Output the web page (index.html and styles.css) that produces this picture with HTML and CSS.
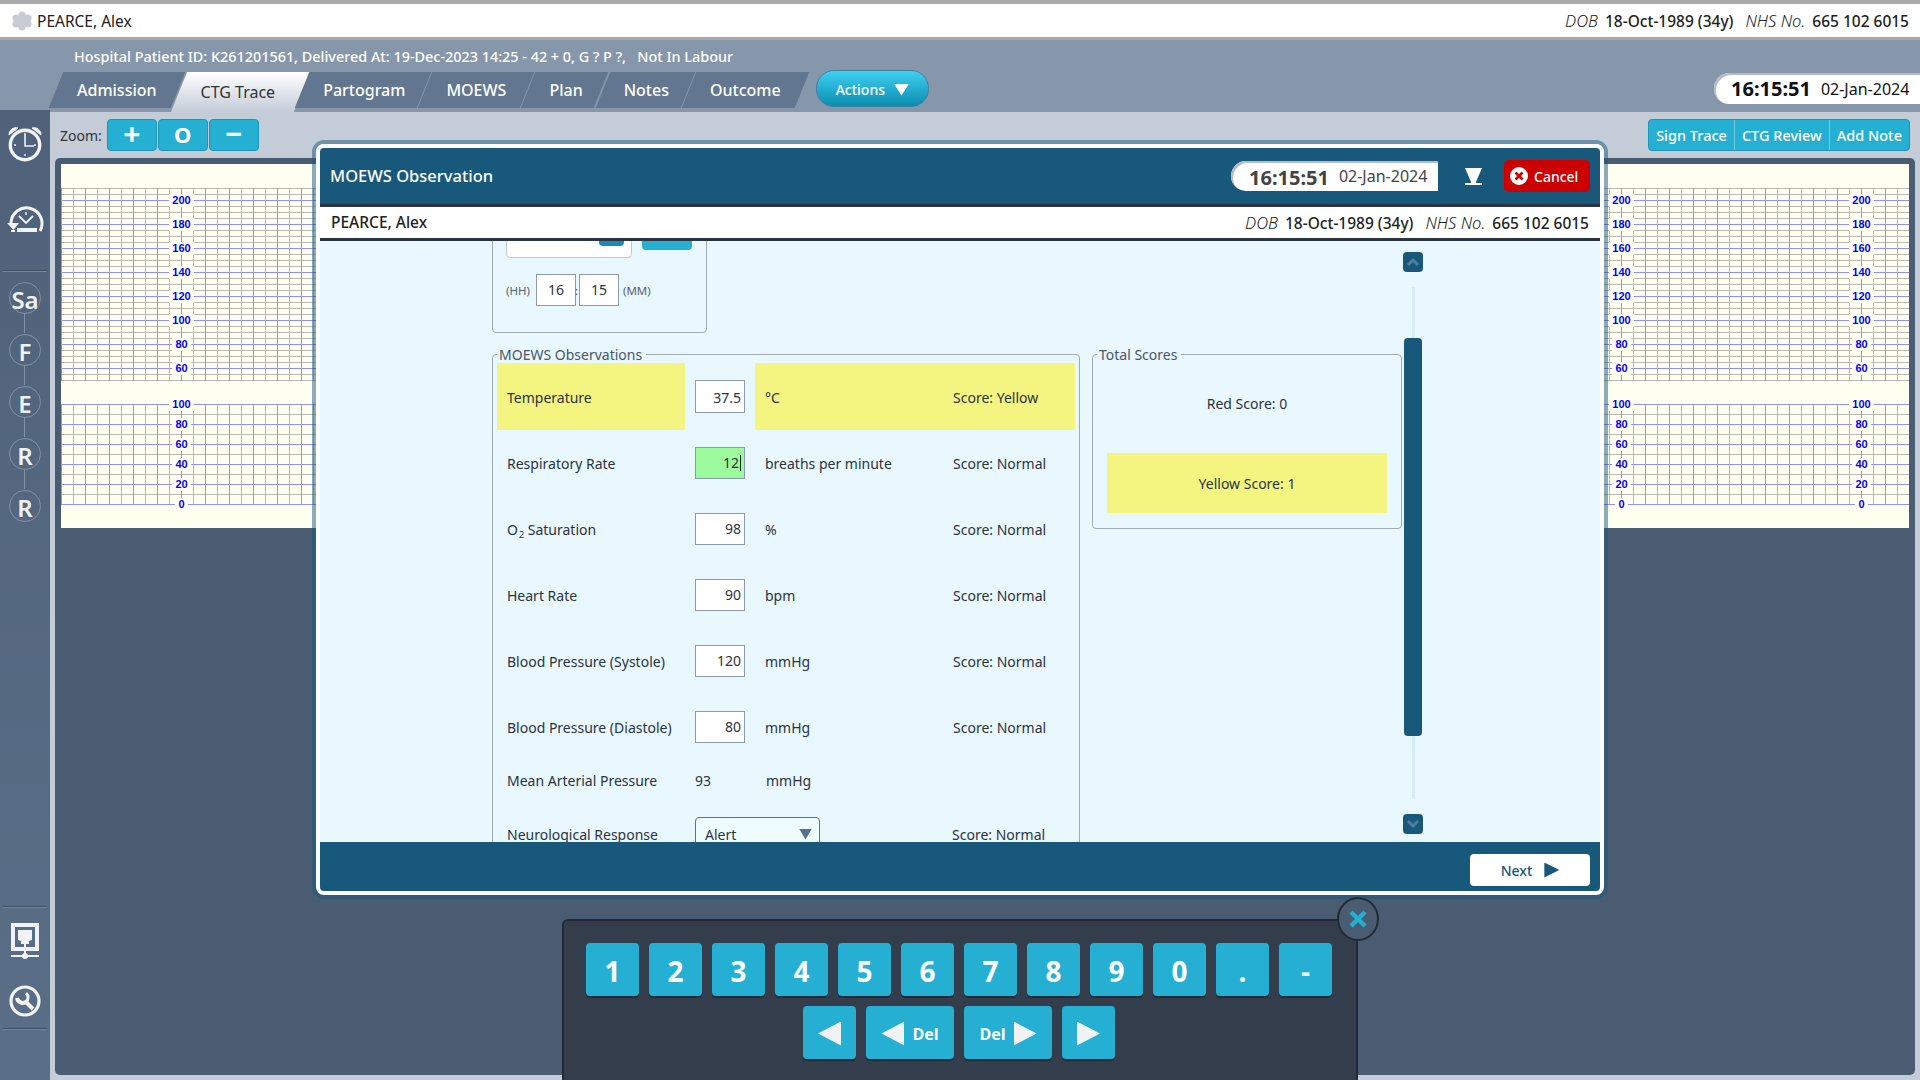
FILE: index.html
```html
<!DOCTYPE html>
<html lang="en">
<head>
    <meta charset="UTF-8">
    <title>MOEWS Observation</title>
    <link rel="stylesheet" href="styles.css">
</head>
<body>

<div class="patient-bar">
    <svg class="logo" width="22" height="20" viewBox="0 0 22 20"><g fill="#c9cbd3"><circle cx="11" cy="4" r="3.6"/><circle cx="11" cy="16" r="3.6"/><circle cx="5" cy="7" r="3.6"/><circle cx="17" cy="7" r="3.6"/><circle cx="5" cy="13" r="3.6"/><circle cx="17" cy="13" r="3.6"/><circle cx="11" cy="10" r="6"/></g></svg>
    <span class="patient-name">PEARCE, Alex</span>
    <span class="patient-meta"><i>DOB</i> <b>18-Oct-1989 (34y)</b> <i>NHS No.</i> <b>665 102 6015</b></span>
</div>

<div class="header">
    <div class="info">Hospital Patient ID: K261201561, Delivered At: 19-Dec-2023 14:25 - 42 + 0, G ? P ?, &nbsp; Not In Labour</div>
    <div class="tabs">
        <div class="tab">Admission</div>
        <div class="tab active">CTG Trace</div>
        <div class="tab tab-tight">Partogram</div>
        <div class="tab">MOEWS</div>
        <div class="tab tab-tight">Plan</div>
        <div class="tab tab-tight">Notes</div>
        <div class="tab">Outcome</div>
        <div class="actions">Actions <span class="tri-down"></span></div>
        <div class="clock"><b>16:15:51</b><span>02-Jan-2024</span></div>
    </div>
</div>

<div class="main">
    <div class="sidebar">
        <svg class="side-alarm" width="36" height="38" viewBox="0 0 36 38" fill="none" stroke="#f1f3f8"><circle cx="18" cy="21" r="14.7" stroke-width="3.4"/><path d="M18 9v13h9" stroke-width="1.6"/><path d="M18 30v2M7 21h2M27 21h2" stroke-width="1.4"/><path d="M2 11a7 7 0 0 1 9-7zM34 11a7 7 0 0 0-9-7z" fill="#f1f3f8" stroke-width="1"/></svg>
        <svg class="side-history" width="38" height="34" viewBox="0 0 38 34" fill="none" stroke="#f1f3f8"><path d="M5 20A15.5 15.5 0 1 1 34 28" stroke-width="3"/><path d="M1 20h12l-5.500 7z" fill="#f1f3f8" stroke="none"/><path d="M13 13l7 7 7-7" stroke-width="1.8"/><path d="M20 9v3" stroke-width="1.4"/><path d="M11 27h20" stroke-width="4"/><path d="M5 28h4" stroke-width="2"/></svg>
        <div class="side-sep"></div>
        <div class="step">Sa</div>
        <div class="step">F</div>
        <div class="step">E</div>
        <div class="step">R</div>
        <div class="step">R</div>
        <div class="side-sep push"></div>
        <svg class="side-monitor" width="28" height="36" viewBox="0 0 28 36"><path d="M0 0h28v28H0zM4 4v20h20V4z" fill="#f1f3f8" fill-rule="evenodd"/><path d="M7 7h14v10l-3 1v3h-3v12h-2V21h-3v-3l-3-1z" fill="#f1f3f8"/><path d="M0 32h28v2H0z" fill="#f1f3f8"/><circle cx="14" cy="33" r="3" fill="#f1f3f8"/></svg>
        <svg class="side-wrench" width="32" height="32" viewBox="0 0 32 32" fill="none" stroke="#f1f3f8"><circle cx="16" cy="16" r="14" stroke-width="3.2"/><path d="M8 13a6 6 0 0 0 9 4l7 7" stroke-width="4"/><path d="M17 17a6 6 0 0 0 0-9" stroke-width="3"/></svg>
        <div class="side-sep last"></div>
    </div>

    <div class="content">
        <div class="toolbar">
            <span class="zoom-label">Zoom:</span>
            <div class="zoom-btn zoom-sign">+</div>
            <div class="zoom-btn">O</div>
            <div class="zoom-btn zoom-sign">−</div>
            <div class="trace-btns">
                <div class="trace-btn">Sign Trace</div>
                <div class="trace-btn">CTG Review</div>
                <div class="trace-btn">Add Note</div>
            </div>
        </div>
        <div class="panel">
            <div class="paper">
                <div class="chart chart-fhr">
                    <div class="scale scale-a"><span>200</span><span>180</span><span>160</span><span>140</span><span>120</span><span>100</span><span>80</span><span>60</span></div>
                    <div class="scale scale-b"><span>200</span><span>180</span><span>160</span><span>140</span><span>120</span><span>100</span><span>80</span><span>60</span></div>
                    <div class="scale scale-c"><span>200</span><span>180</span><span>160</span><span>140</span><span>120</span><span>100</span><span>80</span><span>60</span></div>
                </div>
                <div class="chart chart-toco">
                    <div class="scale scale-a"><span>100</span><span>80</span><span>60</span><span>40</span><span>20</span><span>0</span></div>
                    <div class="scale scale-b"><span>100</span><span>80</span><span>60</span><span>40</span><span>20</span><span>0</span></div>
                    <div class="scale scale-c"><span>100</span><span>80</span><span>60</span><span>40</span><span>20</span><span>0</span></div>
                </div>
            </div>
        </div>
    </div>
</div>

<div class="modal">
    <div class="modal-inner">
        <div class="modal-head">
            <span class="modal-title">MOEWS Observation</span>
            <div class="modal-clock"><b>16:15:51</b><span>02-Jan-2024</span></div>
            <svg class="funnel" width="17" height="17" viewBox="0 0 17 17"><path d="M0 0h17l-6 14v1h6v2H0v-2h6v-1z" fill="#fff"/></svg>
            <div class="cancel">
                <svg width="18" height="18" viewBox="0 0 18 18"><circle cx="9" cy="9" r="9" fill="#fff"/><path d="M5.500 5.500l7 7M12.500 5.500l-7 7" stroke="#cc0000" stroke-width="2.600"/></svg>
                Cancel
            </div>
        </div>
        <div class="modal-sub">
            <span class="sub-name">PEARCE, Alex</span>
            <span class="patient-meta"><i>DOB</i> <b>18-Oct-1989 (34y)</b> <i>NHS No.</i> <b>665 102 6015</b></span>
        </div>
        <div class="modal-body">
            <div class="form-col">
                <div class="time-box">
                    <div class="date-row">
                        <div class="date-input"><div class="date-icon"></div></div>
                        <div class="date-btn"></div>
                    </div>
                    <div class="time-row">
                        <span class="hint">(HH)</span>
                        <div class="time-input">16</div>
                        <span class="colon">:</span>
                        <div class="time-input">15</div>
                        <span class="hint">(MM)</span>
                    </div>
                </div>
                <fieldset class="obs">
                    <legend>MOEWS Observations</legend>
                    <div class="obs-row yellow">
                        <div class="obs-label">Temperature</div>
                        <div class="obs-box tall">37.5</div>
                        <div class="obs-rest"><span class="obs-unit">°C</span><span>Score: Yellow</span></div>
                    </div>
                    <div class="obs-row">
                        <div class="obs-label">Respiratory Rate</div>
                        <div class="obs-box focus">12</div>
                        <div class="obs-rest"><span class="obs-unit">breaths per minute</span><span>Score: Normal</span></div>
                    </div>
                    <div class="obs-row">
                        <div class="obs-label"><span>O<sub>2</sub> Saturation</span></div>
                        <div class="obs-box">98</div>
                        <div class="obs-rest"><span class="obs-unit">%</span><span>Score: Normal</span></div>
                    </div>
                    <div class="obs-row">
                        <div class="obs-label">Heart Rate</div>
                        <div class="obs-box">90</div>
                        <div class="obs-rest"><span class="obs-unit">bpm</span><span>Score: Normal</span></div>
                    </div>
                    <div class="obs-row">
                        <div class="obs-label">Blood Pressure (Systole)</div>
                        <div class="obs-box">120</div>
                        <div class="obs-rest"><span class="obs-unit">mmHg</span><span>Score: Normal</span></div>
                    </div>
                    <div class="obs-row">
                        <div class="obs-label">Blood Pressure (Diastole)</div>
                        <div class="obs-box">80</div>
                        <div class="obs-rest"><span class="obs-unit">mmHg</span><span>Score: Normal</span></div>
                    </div>
                    <div class="obs-row map">
                        <div class="obs-label">Mean Arterial Pressure</div>
                        <div class="obs-plain">93</div>
                        <div class="obs-rest"><span class="obs-unit">mmHg</span></div>
                    </div>
                    <div class="obs-row">
                        <div class="obs-label">Neurological Response</div>
                        <div class="obs-select">Alert <span class="select-arrow"></span></div>
                        <div class="obs-rest select-rest"><span class="obs-unit"></span><span>Score: Normal</span></div>
                    </div>
                </fieldset>
            </div>
            <fieldset class="totals">
                <legend>Total Scores</legend>
                <div class="total-line">Red Score: 0</div>
                <div class="total-line total-yellow">Yellow Score: 1</div>
            </fieldset>
            <div class="scroller">
                <div class="scroll-btn"><svg width="14" height="10" viewBox="0 0 14 10" fill="none" stroke="#4f7f9c" stroke-width="3"><path d="M2 8l5-5 5 5"/></svg></div>
                <div class="track track-top"></div>
                <div class="thumb"></div>
                <div class="track track-end"></div>
                <div class="scroll-btn"><svg width="14" height="10" viewBox="0 0 14 10" fill="none" stroke="#4f7f9c" stroke-width="3"><path d="M2 2l5 5 5-5"/></svg></div>
            </div>
        </div>
        <div class="modal-foot">
            <div class="next">Next <span class="tri-right small"></span></div>
        </div>
    </div>
</div>

<div class="keypad">
    <div class="key-close"><svg width="18" height="18" viewBox="0 0 18 18" stroke="#25b0d3" stroke-width="4.400"><path d="M2 2l14 14M16 2L2 16"/></svg></div>
    <div class="key-row">
        <div class="key">1</div><div class="key">2</div><div class="key">3</div><div class="key">4</div><div class="key">5</div><div class="key">6</div><div class="key">7</div><div class="key">8</div><div class="key">9</div><div class="key">0</div><div class="key">.</div><div class="key">-</div>
    </div>
    <div class="key-row">
        <div class="key"><span class="tri-left"></span></div>
        <div class="key wide"><span class="tri-left"></span><span class="del">Del</span></div>
        <div class="key wide"><span class="del">Del</span><span class="tri-right"></span></div>
        <div class="key"><span class="tri-right"></span></div>
    </div>
</div>

</body>
</html>
```

FILE: styles.css
```css
* {
    box-sizing: border-box;
}
body {
    position: relative;
    width: 1920px;
    height: 1080px;
    margin: 0;
    overflow: hidden;
    background-color: #c4ccd8;
    color: #2b3340;
    font-family: "Noto Sans", sans-serif;
    font-size: 14px;
}

/* patient strip */
.patient-bar {
    display: flex;
    align-items: center;
    height: 40px;
    padding: 0 11px;
    background-color: #fff;
    border-top: 4px solid #aaa;
    border-bottom: 3px solid #a8a8a8;
    font-size: 15.5px;
}
.logo {
    margin-right: 4px;
}
.patient-name {
    color: #222;
}
.patient-meta {
    margin-left: auto;
    color: #222;
    font-size: 15.5px;
}
.patient-meta i {
    margin-left: 8px;
    font-size: 16.5px;
    font-weight: 300;
}
.patient-meta b {
    margin-left: 3px;
    font-weight: 500;
}

/* header + tabs */
.header {
    height: 72px;
    background-color: #8697ac;
}
.info {
    height: 30px;
    padding: 4px 0 0 74px;
    color: #fff;
    font-size: 14.4px;
    font-weight: 500;
    line-height: 26px;
}
.tabs {
    display: flex;
    align-items: flex-start;
    height: 42px;
    padding-left: 56px;
    gap: 1px;
}
.tab {
    position: relative;
    isolation: isolate;
    height: 36px;
    margin-top: 2px;
    padding: 0 21px;
    color: #fff;
    font-size: 16px;
    font-weight: 500;
    line-height: 36px;
}
.tab-tight {
    padding-right: 19px;
}
.tab::before {
    content: "";
    position: absolute;
    inset: 0;
    z-index: -1;
    background-color: #62778f;
    transform: skewX(-22deg);
}
.tab.active {
    height: 40px;
    padding: 0 26px 0 22px;
    color: #333;
    font-weight: 400;
    line-height: 40px;
}
.tab.active::before {
    background: linear-gradient(#fff, #c4ccd8);
}
.actions {
    display: flex;
    align-items: center;
    gap: 9px;
    height: 37px;
    margin-left: 13px;
    padding: 2px 19px 0;
    border: 1px solid #3f7f9c;
    border-radius: 18px;
    background: linear-gradient(#3fd0f2, #0a8db0);
    color: #fff;
    font-weight: 500;
}
.tri-down {
    width: 15px;
    height: 12px;
    background-color: #fff;
    clip-path: polygon(0 0, 100% 0, 50% 100%);
}
.clock {
    display: flex;
    align-items: center;
    gap: 10px;
    width: 206px;
    height: 31px;
    margin: 3px 0 0 auto;
    padding-left: 17px;
    border-radius: 16px 0 0 16px;
    background-color: #fff;
    box-shadow: inset 2px 2px 0 #b5bcc6;
    color: #111;
    font-size: 16px;
}
.clock b {
    font-size: 20px;
}

/* left rail */
.main {
    display: flex;
    height: 968px;
}
.sidebar {
    position: relative;
    display: flex;
    flex-direction: column;
    align-items: center;
    flex: none;
    width: 50px;
    height: 970px;
    margin-top: -2px;
    background: linear-gradient(#4f6279, #5a6e87);
}
.side-alarm {
    margin-top: 14px;
}
.side-history {
    margin-top: 41px;
}
.side-sep {
    flex: none;
    width: 44px;
    height: 2px;
    margin-top: 33px;
    margin-bottom: 10px;
    background-color: #3f4f63;
    border-bottom: 1px solid #75879c;
}
.side-sep.push {
    margin-top: auto;
    margin-bottom: 15px;
}
.side-sep.last {
    margin-top: 11px;
    margin-bottom: 50px;
}
.step {
    position: relative;
    flex: none;
    width: 32px;
    height: 32px;
    margin-bottom: 20px;
    border: 1px solid #8091a6;
    border-radius: 50%;
    color: #eef1f6;
    font-size: 24px;
    font-weight: 600;
    line-height: 33px;
    text-align: center;
}
.step:not(:nth-last-child(5))::after {
    content: "";
    position: absolute;
    top: 30px;
    left: 14px;
    width: 1px;
    height: 20px;
    background-color: #8091a6;
}
.side-wrench {
    margin-top: 26px;
}

/* toolbar above the trace */
.content {
    flex: 1;
    display: flex;
    flex-direction: column;
    padding: 7px 5px 5px;
}
.toolbar {
    display: flex;
    align-items: center;
    height: 32px;
    margin-bottom: 7px;
    gap: 1px;
}
.zoom-label {
    margin: 0 4px 0 5px;
    color: #333;
}
.zoom-btn {
    width: 50px;
    height: 32px;
    border: 1px solid #1f93b3;
    border-radius: 4px;
    background-color: #25b0d3;
    color: #fff;
    font-size: 22px;
    font-weight: 700;
    line-height: 28px;
    text-align: center;
}
.zoom-sign {
    font-size: 30px;
    line-height: 27px;
}
.trace-btns {
    display: flex;
    height: 32px;
    margin: 0 5px 0 auto;
    border: 1px solid #1f93b3;
    border-radius: 4px;
    background-color: #25b0d3;
    overflow: hidden;
}
.trace-btn {
    padding: 0 7px;
    border-left: 1px solid #72c9e0;
    color: #fff;
    font-size: 14.5px;
    font-weight: 500;
    line-height: 30px;
}
.trace-btn:first-child {
    border-left: none;
}

/* trace paper */
.panel {
    flex: 1;
    padding: 6px;
    border-radius: 5px;
    background-color: #4a5c72;
}
.paper {
    height: 364px;
    padding-top: 24px;
    background-color: #fffff0;
}
.chart {
    position: relative;
}
.chart-fhr {
    height: 193px;
    background-image:
        linear-gradient(to right, #9090ff 1px, transparent 1px),
        linear-gradient(to bottom, #9090ff 1px, transparent 1px),
        linear-gradient(to right, #b8b8b8 1px, transparent 1px),
        linear-gradient(to bottom, #b8b8b8 1px, transparent 1px);
    background-size: 24px 100%, 100% 24px, 12px 100%, 100% 6px;
    background-position: 0 0, 0 12px, 0 0, 0 0;
}
.chart-toco {
    height: 101px;
    margin-top: 23px;
    background-image:
        linear-gradient(to right, #9090ff 1px, transparent 1px),
        linear-gradient(to bottom, #9090ff 1px, transparent 1px),
        linear-gradient(to right, #b8b8b8 1px, transparent 1px),
        linear-gradient(to bottom, #b8b8b8 1px, transparent 1px);
    background-size: 24px 100%, 100% 20px, 12px 100%, 100% 10px;
}
.scale {
    position: absolute;
    top: 0;
    bottom: 0;
    display: flex;
    flex-direction: column;
    align-items: center;
    width: 40px;
    margin-left: -20px;
    background: linear-gradient(#9090ff, #9090ff) center / 1px 100% no-repeat;
    color: #0000ff;
    font-family: "Liberation Sans", sans-serif;
    font-size: 11px;
    font-weight: 700;
}
.scale-a {
    left: 120.5px;
}
.scale-b {
    left: 1560.5px;
}
.scale-c {
    left: 1800.5px;
}
.scale span {
    flex: none;
    height: 13px;
    padding: 0 3px;
    background-color: #fffff0;
    line-height: 13px;
}
.chart-fhr .scale span {
    margin: 5.5px 0;
}
.chart-toco .scale {
    top: -6px;
    bottom: auto;
    height: 113px;
}
.chart-toco .scale span {
    margin-bottom: 7px;
}

/* modal */
.modal {
    position: absolute;
    top: 140px;
    left: 312px;
    width: 1296px;
    height: 759px;
    border: 4px solid rgba(24, 88, 122, 0.5);
    border-radius: 12px;
}
.modal-inner {
    display: flex;
    flex-direction: column;
    height: 100%;
    border: 4px solid #fff;
    border-radius: 8px;
    background-color: #fff;
    overflow: hidden;
}
.modal-head {
    display: flex;
    align-items: center;
    flex: none;
    height: 59px;
    padding: 0 10px;
    background-color: #18587a;
    border-bottom: 3px solid #2a3442;
    color: #fff;
}
.modal-title {
    padding-bottom: 2px;
    font-size: 16.5px;
    font-weight: 500;
}
.modal-clock {
    display: flex;
    align-items: center;
    gap: 10px;
    width: 207px;
    height: 30px;
    margin-left: auto;
    padding-left: 18px;
    border-radius: 15px 0 0 15px;
    background-color: #fff;
    box-shadow: inset 2px 2px 0 #b5bcc6;
    color: #444;
    font-size: 16px;
}
.modal-clock b {
    padding-top: 3px;
    font-size: 20px;
}
.funnel {
    margin: 0 22px 0 27px;
}
.cancel {
    display: flex;
    align-items: center;
    gap: 6px;
    width: 86px;
    height: 32px;
    padding-left: 6px;
    border-radius: 5px;
    background-color: #cc0000;
    font-weight: 500;
}
.modal-sub {
    display: flex;
    align-items: center;
    flex: none;
    height: 34px;
    padding: 0 11px 1px;
    background-color: #fff;
    border-bottom: 3px solid #2a3442;
}
.sub-name {
    color: #222;
    font-size: 15.5px;
    font-weight: 500;
}
.modal-body {
    display: flex;
    align-items: flex-start;
    flex: none;
    height: 601px;
    padding-left: 172px;
    background-color: #e9f7ff;
    overflow: hidden;
}
.form-col {
    flex: none;
    width: 588px;
}

/* date + time box, mostly scrolled away */
.time-box {
    width: 215px;
    height: 152px;
    margin-top: -60px;
    padding: 26px 13px 0;
    border: 1px solid #a0aab8;
    border-radius: 4px;
}
.date-row {
    display: flex;
    align-items: flex-start;
    gap: 10px;
}
.date-input {
    display: flex;
    align-items: flex-end;
    justify-content: flex-end;
    width: 126px;
    height: 50px;
    padding: 0 7px 11px 0;
    border: 1px solid #c0c8d2;
    border-radius: 4px;
    background-color: #fff;
}
.date-icon {
    width: 25px;
    height: 8px;
    border-radius: 4px;
    background-color: #1e88b8;
}
.date-btn {
    width: 50px;
    height: 42px;
    border-radius: 4px;
    background-color: #25b0d3;
}
.time-row {
    display: flex;
    align-items: center;
    gap: 4px;
    margin-top: 16px;
}
.hint {
    color: #5a6270;
    font-size: 11.5px;
}
.colon {
    width: 0;
    margin-left: -5px;
    font-size: 11px;
}
.time-input {
    width: 40px;
    height: 32px;
    border: 1px solid #8a9ab0;
    background-color: #fff;
    line-height: 30px;
    text-align: center;
}
.hint:first-child {
    margin-right: 2px;
}

/* observations */
fieldset {
    margin: 0;
    padding: 0 4px;
    border: 1px solid #a0aab8;
    border-radius: 4px;
}
legend {
    position: relative;
    top: 1px;
    padding: 0 4px 0 2px;
    color: #4a5568;
    font-size: 14px;
    line-height: 18px;
}
.obs {
    width: 587px;
    margin-top: 12px;
}
.obs-row {
    display: flex;
    align-items: center;
    width: 578px;
    height: 66px;
}
.obs-row.yellow {
    height: 67px;
}
.obs-row.map {
    height: 41px;
}
.obs-label {
    display: flex;
    align-items: center;
    flex: none;
    width: 188px;
    height: 100%;
    padding-left: 10px;
    white-space: nowrap;
}
.obs-label sub {
    position: relative;
    top: 3px;
    margin-left: 1px;
    font-size: 9px;
    line-height: 1;
    vertical-align: baseline;
}
.obs-rest {
    display: flex;
    align-items: center;
    flex: 1;
    height: 100%;
    padding-left: 10px;
}
.obs-unit {
    flex: none;
    width: 188px;
}
.yellow .obs-label,
.yellow .obs-rest {
    padding-top: 2px;
    background-color: #f4f580;
}
.obs-box {
    flex: none;
    width: 50px;
    height: 32px;
    margin: 0 10px;
    padding-right: 3px;
    border: 1px solid #8a9ab0;
    background-color: #fff;
    line-height: 30px;
    text-align: right;
}
.obs-box.tall {
    height: 33px;
    line-height: 33px;
}
.obs-box.focus {
    background-color: #9cfb9c;
}
.obs-box.focus::after {
    content: "";
    display: inline-block;
    width: 1px;
    height: 16px;
    margin-left: 1px;
    background-color: #222;
    vertical-align: -3px;
}
.obs-plain {
    flex: none;
    width: 50px;
    margin: 0 10px;
}
.map .obs-rest {
    padding-left: 11px;
}
.obs-select {
    display: flex;
    align-items: center;
    justify-content: space-between;
    flex: none;
    width: 125px;
    height: 35px;
    margin: 0 10px;
    padding: 0 7px 0 9px;
    border: 1px solid #5e7087;
    border-radius: 4px;
    background-color: #eefcff;
}
.select-arrow {
    width: 13px;
    height: 11px;
    background-color: #5a6e87;
    clip-path: polygon(0 0, 100% 0, 50% 100%);
}
.select-rest .obs-unit {
    width: 112px;
}

/* totals */
.totals {
    flex: none;
    width: 310px;
    height: 184px;
    margin: 104px 0 0 12px;
    padding: 0 14px;
}
.totals legend {
    margin-left: -10px;
}
.total-line {
    height: 80px;
    padding-top: 1px;
    line-height: 80px;
    text-align: center;
}
.total-yellow {
    height: 60px;
    margin-top: 10px;
    background-color: #f4f580;
    line-height: 60px;
}

/* scrollbar */
.scroller {
    display: flex;
    flex-direction: column;
    align-items: center;
    flex: none;
    width: 20px;
    height: 582px;
    margin: 11px 0 0 1px;
}
.scroll-btn {
    display: flex;
    align-items: center;
    justify-content: center;
    flex: none;
    width: 20px;
    height: 20px;
    border-radius: 4px;
    background-color: #18587a;
}
.track {
    width: 3px;
    background-color: #d6eefc;
}
.track-top {
    height: 51px;
    margin-top: 15px;
}
.track-end {
    flex: 1;
    margin-bottom: 15px;
}
.thumb {
    flex: none;
    width: 18px;
    height: 398px;
    border-radius: 4px;
    background-color: #18587a;
}

.modal-foot {
    display: flex;
    justify-content: flex-end;
    flex: none;
    height: 50px;
    padding: 12px 10px 0 0;
    background-color: #18587a;
}
.next {
    display: flex;
    align-items: center;
    justify-content: center;
    gap: 12px;
    width: 120px;
    height: 32px;
    border-radius: 4px;
    background-color: #fff;
    color: #18587a;
    font-weight: 500;
}

/* on-screen number pad */
.keypad {
    position: absolute;
    top: 919px;
    left: 562px;
    width: 796px;
    height: 200px;
    padding-top: 22px;
    border: 2px solid #222a36;
    border-radius: 6px;
    background-color: #333d4b;
}
.key-close {
    position: absolute;
    top: -24px;
    right: -23px;
    display: flex;
    align-items: center;
    justify-content: center;
    width: 42px;
    height: 44px;
    border: 2px solid #222a36;
    border-radius: 50%;
    background-color: #4a5c72;
}
.key-row {
    display: flex;
    justify-content: center;
    gap: 10px;
    margin-bottom: 10px;
    padding-right: 2px;
}
.key {
    display: flex;
    align-items: center;
    justify-content: center;
    gap: 8px;
    width: 53px;
    height: 53px;
    padding-top: 2px;
    border-radius: 4px;
    background-color: #25b0d3;
    box-shadow: 0 2px 0 #222a36;
    color: #fff;
    font-family: "Open Sans", sans-serif;
    font-size: 28px;
    font-weight: 700;
}
.key.wide {
    width: 88px;
}
.del {
    font-size: 16px;
}
.tri-left,
.tri-right {
    flex: none;
    width: 23px;
    height: 24px;
    background-color: #f2f2f2;
}
.tri-left {
    clip-path: polygon(100% 0, 100% 100%, 0 50%);
}
.tri-right {
    clip-path: polygon(0 0, 0 100%, 100% 50%);
}
.tri-right.small {
    width: 15px;
    height: 15px;
    background-color: #18587a;
}
```
